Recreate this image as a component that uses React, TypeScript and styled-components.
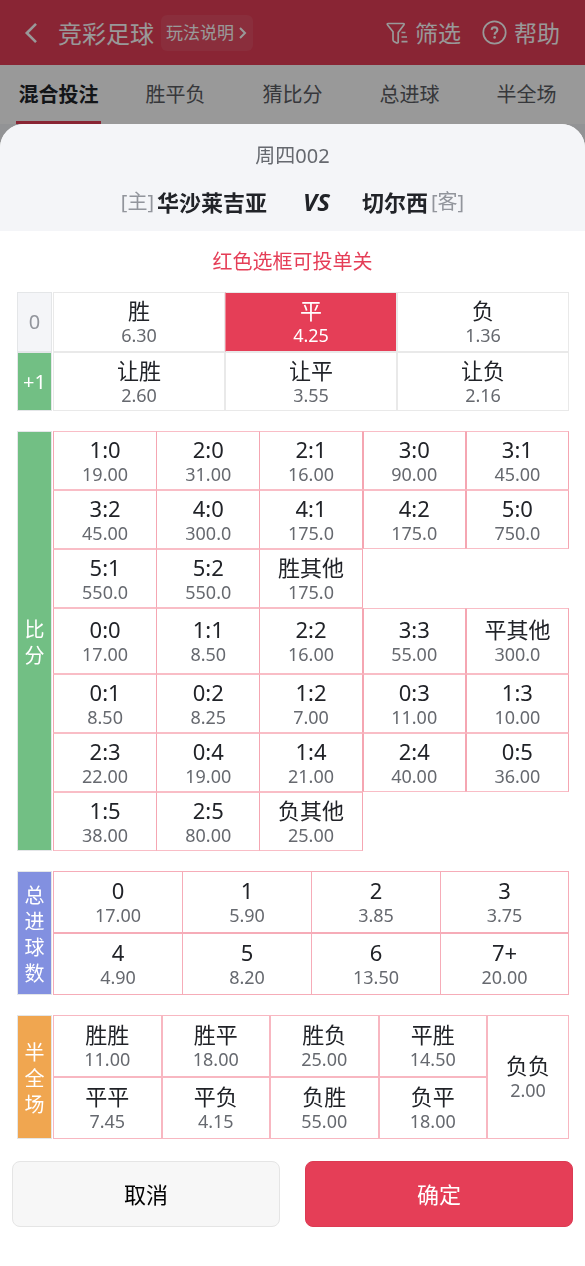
import React, { useState } from 'react';
import styled, { createGlobalStyle, css } from 'styled-components';

const GlobalStyle = createGlobalStyle`
  *, *::before, *::after { box-sizing: border-box; }
  body {
    margin: 0;
    background: #f4f5f8;
    font-family: "Noto Sans", "Noto Sans CJK SC", sans-serif;
    color: #212328;
  }
  button { font-family: inherit; cursor: pointer; }
  h1, h2, p { margin: 0; font-weight: 400; }
`;

const RED = '#e53e57';

const Header = styled.header`
  display: flex;
  align-items: center;
  height: 65px;
  padding: 0 25px 0 24px;
  background: ${RED};
  color: #fff;
`;

const BackButton = styled.button`
  display: flex;
  margin-right: 20px;
  padding: 0;
  border: 0;
  background: none;
  color: inherit;
`;

const PageTitle = styled.h1`
  padding-top: 2px;
  font-size: 24px;
  line-height: 36px;
  white-space: nowrap;
`;

const RulesButton = styled.button`
  display: flex;
  align-items: center;
  gap: 5px;
  height: 36px;
  margin-left: 7px;
  padding: 0 6px 0 5px;
  border: 0;
  border-radius: 6px;
  background: rgba(255, 255, 255, 0.08);
  color: #fff;
  font-size: 17px;
  line-height: 24px;
  white-space: nowrap;
`;

const HeaderActions = styled.div`
  display: flex;
  gap: 21px;
  margin-left: auto;
`;

const HeaderAction = styled.button`
  display: flex;
  align-items: center;
  gap: 7px;
  padding: 0;
  border: 0;
  background: none;
  color: inherit;
  font-size: 23px;
  line-height: 36px;
  white-space: nowrap;
`;

const Tabs = styled.nav`
  display: grid;
  grid-template-columns: repeat(5, 1fr);
  height: 59px;
  background: #fff;
`;

const Tab = styled.a<{ $active?: boolean }>`
  display: flex;
  align-items: center;
  justify-content: center;
  justify-self: center;
  min-width: 85px;
  border-top: 3px solid transparent;
  border-bottom: 3px solid ${(p) => (p.$active ? RED : 'transparent')};
  color: ${(p) => (p.$active ? '#212328' : '#5a5d63')};
  font-size: 20px;
  line-height: 28px;
  font-weight: ${(p) => (p.$active ? 700 : 400)};
  text-decoration: none;
  white-space: nowrap;
`;

const Overlay = styled.div`
  position: fixed;
  inset: 0;
  display: flex;
  overflow-y: auto;
  background: rgba(0, 0, 0, 0.4);
`;

const Sheet = styled.section`
  width: 100%;
  margin-top: auto;
  border-radius: 24px 24px 0 0;
  background: #fff;
  overflow: hidden;
`;

const SheetHead = styled.div`
  height: 107px;
  padding-top: 18px;
  background: #f4f5f8;
  text-align: center;
`;

const MatchNo = styled.p`
  color: #66696f;
  font-size: 20px;
  line-height: 28px;
`;

const Teams = styled.h2`
  display: flex;
  align-items: center;
  justify-content: center;
  gap: 3px;
  margin-top: 16px;
  font-size: 22px;
  line-height: 32px;
  font-weight: 700;
`;

const Side = styled.span`
  color: #92959c;
  font-size: 20px;
  font-weight: 400;
`;

const Versus = styled.em`
  margin: 0 29px 0 33px;
  font-size: 24px;
`;

const Notice = styled.p`
  padding: 17px 0 16px;
  color: ${RED};
  font-size: 20px;
  line-height: 28px;
  text-align: center;
`;

const Blocks = styled.div`
  display: flex;
  flex-direction: column;
  gap: 20px;
  padding: 0 16px 0 17px;
`;

const Block = styled.div`
  display: grid;
  grid-template-columns: 35px 1fr;
  column-gap: 1px;
`;

const SideLabels = styled.div<{ $rows?: string }>`
  display: grid;
  grid-template-rows: ${(p) => p.$rows ?? '1fr'};
`;

const SideLabel = styled.div<{ $bg: string; $color?: string }>`
  display: flex;
  align-items: center;
  justify-content: center;
  border: 1px solid #e4e6e8;
  background: ${(p) => p.$bg};
  color: ${(p) => p.$color ?? '#fff'};
  font-size: 20px;
  line-height: 26px;
`;

const Stacked = styled.span`
  width: 20px;
  padding-top: 3px;
`;

const Options = styled.div<{ $cols: string; $rows: string }>`
  display: grid;
  grid-template-columns: ${(p) => p.$cols};
  grid-template-rows: ${(p) => p.$rows};
`;

type Tone = 'grey' | 'score' | 'goals' | 'half';

const tones = {
  grey: css`border: 1px solid #e9e9e9;`,
  score: css`
    border: 1px solid #f5a6b2;
    border-top-color: #f9bdc6;
    border-bottom-color: #f9bdc6;
  `,
  goals: css`border: 1px solid #f6acb8;`,
  half: css`border: 1px solid #f8b7c1;`,
};

const Option = styled.button<{ $tone: Tone; $open?: boolean; $tall?: boolean }>`
  display: flex;
  flex-direction: column;
  align-items: center;
  justify-content: center;
  min-width: 0;
  padding: 0;
  background: #fff;
  color: #212328;
  ${(p) => tones[p.$tone]}
  ${(p) => p.$open && css`border-right: 0;`}
  ${(p) => p.$tall && css`grid-area: 1 / 5 / 3 / 6;`}

  &[aria-pressed='true'] {
    border-left-color: #f08a9a;
    background: ${RED};
    color: #fff;
  }
`;

const Name = styled.span`
  font-size: 22px;
  line-height: 26px;
  white-space: nowrap;
`;

const Odds = styled.span`
  color: #66696f;
  font-size: 18px;
  line-height: 24px;

  [aria-pressed='true'] > & {
    color: #fff;
  }
`;

const Blank = styled.span`
  grid-column: 4 / 6;
`;

const Actions = styled.div`
  display: grid;
  grid-template-columns: 1fr 1fr;
  gap: 25px;
  padding: 22px 12px 39px;
`;

const ActionButton = styled.button<{ $primary?: boolean }>`
  height: 66px;
  border: 1px solid ${(p) => (p.$primary ? '#dc3b53' : '#e5e5e5')};
  border-radius: 8px;
  background: ${(p) => (p.$primary ? RED : '#f7f7f7')};
  color: ${(p) => (p.$primary ? '#fff' : '#000')};
  font-size: 22px;
  line-height: 32px;
`;

type Bet = [name: string, odds: string];

const RESULT: Bet[] = [
  ['胜', '6.30'], ['平', '4.25'], ['负', '1.36'],
  ['让胜', '2.60'], ['让平', '3.55'], ['让负', '2.16'],
];

const SCORES: (Bet | null)[] = [
  ['1:0', '19.00'], ['2:0', '31.00'], ['2:1', '16.00'], ['3:0', '90.00'], ['3:1', '45.00'],
  ['3:2', '45.00'], ['4:0', '300.0'], ['4:1', '175.0'], ['4:2', '175.0'], ['5:0', '750.0'],
  ['5:1', '550.0'], ['5:2', '550.0'], ['胜其他', '175.0'], null,
  ['0:0', '17.00'], ['1:1', '8.50'], ['2:2', '16.00'], ['3:3', '55.00'], ['平其他', '300.0'],
  ['0:1', '8.50'], ['0:2', '8.25'], ['1:2', '7.00'], ['0:3', '11.00'], ['1:3', '10.00'],
  ['2:3', '22.00'], ['0:4', '19.00'], ['1:4', '21.00'], ['2:4', '40.00'], ['0:5', '36.00'],
  ['1:5', '38.00'], ['2:5', '80.00'], ['负其他', '25.00'], null,
];

// Columns whose right edge is drawn by the next cell's left border
const OPEN_SCORES = new Set([
  '1:0', '2:0', '3:2', '4:0', '5:1', '5:2', '0:0', '1:1', '0:1', '0:2', '2:3', '0:4', '1:5', '2:5',
]);

const GOALS: Bet[] = [
  ['0', '17.00'], ['1', '5.90'], ['2', '3.85'], ['3', '3.75'],
  ['4', '4.90'], ['5', '8.20'], ['6', '13.50'], ['7+', '20.00'],
];

const HALF: Bet[] = [
  ['胜胜', '11.00'], ['胜平', '18.00'], ['胜负', '25.00'], ['平胜', '14.50'],
  ['平平', '7.45'], ['平负', '4.15'], ['负胜', '55.00'], ['负平', '18.00'],
];

const TABS = ['混合投注', '胜平负', '猜比分', '总进球', '半全场'];

const BackIcon = () => (
  <svg width="14" height="22" viewBox="0 0 14 22" fill="none" stroke="currentColor" strokeWidth="2.6" aria-hidden="true">
    <path d="M12 1.800 L2.800 11 L12 20.200" />
  </svg>
);

const MoreIcon = () => (
  <svg width="8" height="12" viewBox="0 0 8 12" fill="none" stroke="currentColor" strokeWidth="2" aria-hidden="true">
    <path d="M1 1 L6 6 L1 11" />
  </svg>
);

const FunnelIcon = () => (
  <svg width="22" height="22" viewBox="0 0 22 22" fill="none" stroke="currentColor" strokeWidth="1.7" aria-hidden="true">
    <path d="M12.200 10.500 L17.800 3 Q18.700 1.500 17.200 1.500 H2.200 Q.7 1.500 1.600 2.900 L7 9.800 V18 Q7.100 19 8 19.500 L10.600 20.900 Q12 21.300 12.200 20 Z" strokeLinejoin="round" />
    <path d="M15.500 10.500 H19.500 M15.500 15 H21 M15.500 19.700 H21.500" />
  </svg>
);

const HelpIcon = () => (
  <svg width="25" height="25" viewBox="0 0 25 25" fill="none" stroke="currentColor" aria-hidden="true">
    <circle cx="12.500" cy="12.500" r="11.200" strokeWidth="1.700" />
    <path d="M9.600 9.800 Q9.800 7.300 12.500 7.300 Q15.400 7.400 15.400 9.900 Q15.400 11.300 13.900 12.300 Q12.600 13.100 12.600 14.700" strokeWidth="2" />
    <circle cx="12.600" cy="17.400" r="1.300" fill="currentColor" stroke="none" />
  </svg>
);

export default function App() {
  const [picked, setPicked] = useState<string[]>(['平']);
  const toggle = (name: string) =>
    setPicked((list) => (list.includes(name) ? list.filter((n) => n !== name) : [...list, name]));

  const option = ([name, odds]: Bet, tone: Tone, open = false, tall = false) => (
    <Option
      key={name}
      type="button"
      $tone={tone}
      $open={open}
      $tall={tall}
      aria-pressed={picked.includes(name)}
      onClick={() => toggle(name)}
    >
      <Name>{name}</Name>
      <Odds>{odds}</Odds>
    </Option>
  );

  return (
    <>
      <GlobalStyle />
      <Header>
        <BackButton type="button" aria-label="返回">
          <BackIcon />
        </BackButton>
        <PageTitle>竞彩足球</PageTitle>
        <RulesButton type="button">
          玩法说明
          <MoreIcon />
        </RulesButton>
        <HeaderActions>
          <HeaderAction type="button"><FunnelIcon />筛选</HeaderAction>
          <HeaderAction type="button"><HelpIcon />帮助</HeaderAction>
        </HeaderActions>
      </Header>
      <Tabs>
        {TABS.map((tab, i) => (
          <Tab key={tab} href="#" $active={i === 0}>{tab}</Tab>
        ))}
      </Tabs>

      <Overlay>
        <Sheet role="dialog" aria-modal="true" aria-labelledby="match-title">
          <SheetHead>
            <MatchNo>周四002</MatchNo>
            <Teams id="match-title">
              <Side>[主]</Side>
              <span>华沙莱吉亚</span>
              <Versus>VS</Versus>
              <span>切尔西</span>
              <Side>[客]</Side>
            </Teams>
          </SheetHead>
          <Notice>红色选框可投单关</Notice>

          <Blocks>
            <Block>
              <SideLabels $rows="60px 59px">
                <SideLabel $bg="#f4f5f8" $color="#92959c">0</SideLabel>
                <SideLabel $bg="#72bf84">+1</SideLabel>
              </SideLabels>
              <Options $cols="repeat(3, 1fr)" $rows="60px 59px">
                {RESULT.map((bet) => option(bet, 'grey'))}
              </Options>
            </Block>

            <Block>
              <SideLabels>
                <SideLabel $bg="#72bf84"><Stacked>比分</Stacked></SideLabel>
              </SideLabels>
              <Options $cols="repeat(5, 1fr)" $rows="repeat(3, 59px) 66px repeat(3, 59px)">
                {SCORES.map((bet, i) =>
                  bet ? option(bet, 'score', OPEN_SCORES.has(bet[0])) : <Blank key={i} />,
                )}
              </Options>
            </Block>

            <Block>
              <SideLabels>
                <SideLabel $bg="#8290e0"><Stacked>总进球数</Stacked></SideLabel>
              </SideLabels>
              <Options $cols="repeat(4, 1fr)" $rows="repeat(2, 62px)">
                {GOALS.map((bet, i) => option(bet, 'goals', i % 4 < 3))}
              </Options>
            </Block>

            <Block>
              <SideLabels>
                <SideLabel $bg="#f0a650"><Stacked>半全场</Stacked></SideLabel>
              </SideLabels>
              <Options $cols="repeat(4, 1fr) 82px" $rows="repeat(2, 62px)">
                {HALF.map((bet) => option(bet, 'half'))}
                {option(['负负', '2.00'], 'half', false, true)}
              </Options>
            </Block>
          </Blocks>

          <Actions>
            <ActionButton type="button">取消</ActionButton>
            <ActionButton type="button" $primary>确定</ActionButton>
          </Actions>
        </Sheet>
      </Overlay>
    </>
  );
}
